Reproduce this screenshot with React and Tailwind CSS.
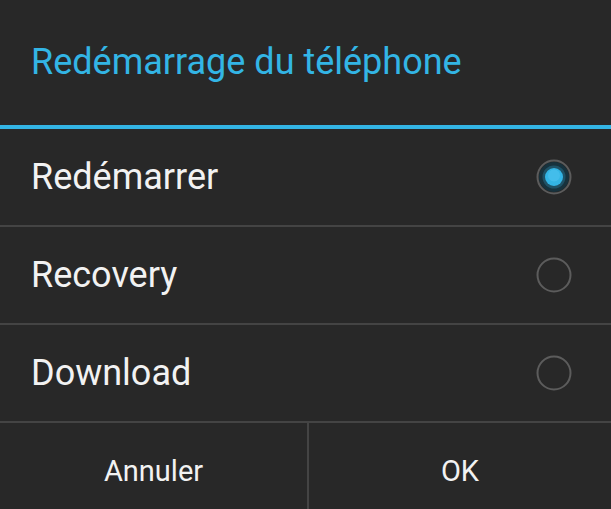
import { useState } from 'react';

const options = ['Redémarrer', 'Recovery', 'Download'];

function Radio({ checked }) {
  return (
    <svg width="38" height="38" viewBox="0 0 38 38">
      {checked && <circle cx="19" cy="19" r="15" fill="#17323d" />}
      {checked && <circle cx="19" cy="19" r="11.5" fill="#1f5266" />}
      <circle cx="19" cy="19" r="16.5" fill="none" stroke="#5c5c5c" strokeWidth="2" />
      {checked && (
        <>
          <circle cx="19" cy="19" r="9" fill="#33b5e5" />
          <circle cx="19" cy="17.5" r="6" fill="#4fc3ee" opacity="0.6" />
        </>
      )}
    </svg>
  );
}

export default function App() {
  const [selected, setSelected] = useState(0);

  return (
    <div className="w-[611px] h-[509px] overflow-hidden bg-[#282828] font-['Roboto',sans-serif] text-[#f2f2f2]">
      {/* Title */}
      <div className="h-[125px] flex items-center pl-[31px] pr-8 pb-[2px]">
        <h1 className="text-[36px] text-[#33b5e5] leading-none">Redémarrage du téléphone</h1>
      </div>
      <div className="h-[4px] bg-[#33b5e5]"></div>

      {/* Options */}
      <div className="flex flex-col">
        {options.map((label, i) => (
          <button
            key={label}
            onClick={() => setSelected(i)}
            className="h-[98px] flex items-center justify-between pl-[31px] pr-[38px] border-b-2 border-[#444444] text-left"
          >
            <span className="text-[36px] leading-none">{label}</span>
            <Radio checked={selected === i} />
          </button>
        ))}
      </div>

      {/* Buttons */}
      <div className="flex h-[96px]">
        <button className="w-[307px] flex items-center justify-center text-[29px] leading-none">Annuler</button>
        <div className="w-[2px] bg-[#444444]"></div>
        <button className="flex-1 flex items-center justify-center text-[29px] leading-none">OK</button>
      </div>
    </div>
  );
}
